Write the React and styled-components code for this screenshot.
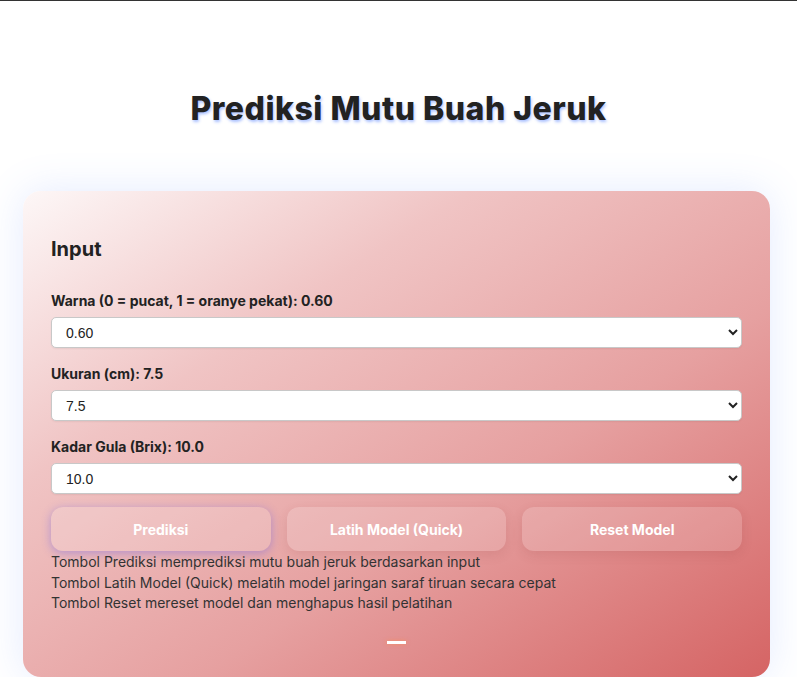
import React, { useState } from 'react'
import styled, { createGlobalStyle } from 'styled-components'

const GlobalStyle = createGlobalStyle`
  html, body {
    margin: 0;
    padding: 0;
    background: #ffffff;
    font-family: Inter, "Noto Sans", sans-serif;
    overflow: hidden;
  }
  * { box-sizing: border-box; }
`

const Page = styled.div`
  height: 677px;
  overflow: hidden;
  border-top: 1px solid #333;
`

const Title = styled.h1`
  margin: 0;
  padding-top: 88px;
  text-align: center;
  font-size: 32px;
  line-height: 40px;
  font-weight: 800;
  letter-spacing: 0.5px;
  color: #222;
  text-shadow: 1px 2px 3px rgba(70, 120, 255, 0.45);
`

const Card = styled.div`
  width: 747px;
  margin: 62px 0 0 23px;
  padding: 46px 28px 33px;
  border-radius: 18px;
  background: linear-gradient(to bottom right, #fdf7f7 0%, #f0c4c4 30%, #e6a0a0 62%, #d56464 100%);
  box-shadow: 0 0 40px rgba(90, 130, 255, 0.16);
`

const Heading = styled.h2`
  margin: 0 0 31px;
  font-size: 20px;
  line-height: 24px;
  font-weight: 700;
  color: #222;
`

const Field = styled.div`
  display: flex;
  flex-direction: column;
  gap: 7px;
  margin-bottom: 17px;
`

const Label = styled.label`
  font-size: 14px;
  line-height: 18px;
  font-weight: 700;
  color: #222;
`

const Select = styled.select`
  width: 100%;
  height: 31px;
  padding: 0 10px;
  border: 1px solid #c8c8c8;
  border-radius: 5px;
  background: #fff;
  font-family: "Liberation Sans", Arial, sans-serif;
  font-size: 14px;
  color: #222;
  box-shadow: 0 1px 2px rgba(0, 0, 0, 0.06);
`

const Buttons = styled.div`
  display: grid;
  grid-template-columns: repeat(3, 1fr);
  gap: 16px;
  margin-top: -4px;
`

const Button = styled.button`
  height: 44px;
  border: none;
  border-radius: 12px;
  background: rgba(255, 255, 255, 0.16);
  color: #fff;
  font-family: Inter, sans-serif;
  font-size: 14px;
  font-weight: 700;
  box-shadow: ${p => p.$focus
    ? '0 2px 10px rgba(110, 100, 230, 0.45)'
    : '0 4px 12px rgba(120, 40, 40, 0.12)'};
`

const Notes = styled.div`
  margin-top: 1px;
  font-size: 14px;
  line-height: 20.5px;
  color: #333;
`

const Dash = styled.div`
  width: 19px;
  height: 3px;
  margin: 27px auto 0;
  background: #fff;
  box-shadow: 0 0 4px rgba(255, 140, 80, 0.7);
`

const fields = [
  { label: 'Warna (0 = pucat, 1 = oranye pekat): 0.60', value: '0.60', options: ['0.00', '0.20', '0.40', '0.60', '0.80', '1.00'] },
  { label: 'Ukuran (cm): 7.5', value: '7.5', options: ['5.0', '6.0', '7.5', '9.0', '10.0'] },
  { label: 'Kadar Gula (Brix): 10.0', value: '10.0', options: ['6.0', '8.0', '10.0', '12.0', '14.0'] },
]

export default function App() {
  const [values, setValues] = useState(fields.map(f => f.value))

  return (
    <Page>
      <GlobalStyle />
      <Title>Prediksi Mutu Buah Jeruk</Title>
      <Card>
        <Heading>Input</Heading>
        {fields.map((f, i) => (
          <Field key={f.label}>
            <Label>{f.label}</Label>
            <Select
              value={values[i]}
              onChange={e => setValues(values.map((v, j) => (j === i ? e.target.value : v)))}
            >
              {f.options.map(o => <option key={o}>{o}</option>)}
            </Select>
          </Field>
        ))}
        <Buttons>
          <Button $focus>Prediksi</Button>
          <Button>Latih Model (Quick)</Button>
          <Button>Reset Model</Button>
        </Buttons>
        <Notes>
          <div>Tombol Prediksi memprediksi mutu buah jeruk berdasarkan input</div>
          <div>Tombol Latih Model (Quick) melatih model jaringan saraf tiruan secara cepat</div>
          <div>Tombol Reset mereset model dan menghapus hasil pelatihan</div>
        </Notes>
        <Dash />
      </Card>
    </Page>
  )
}
